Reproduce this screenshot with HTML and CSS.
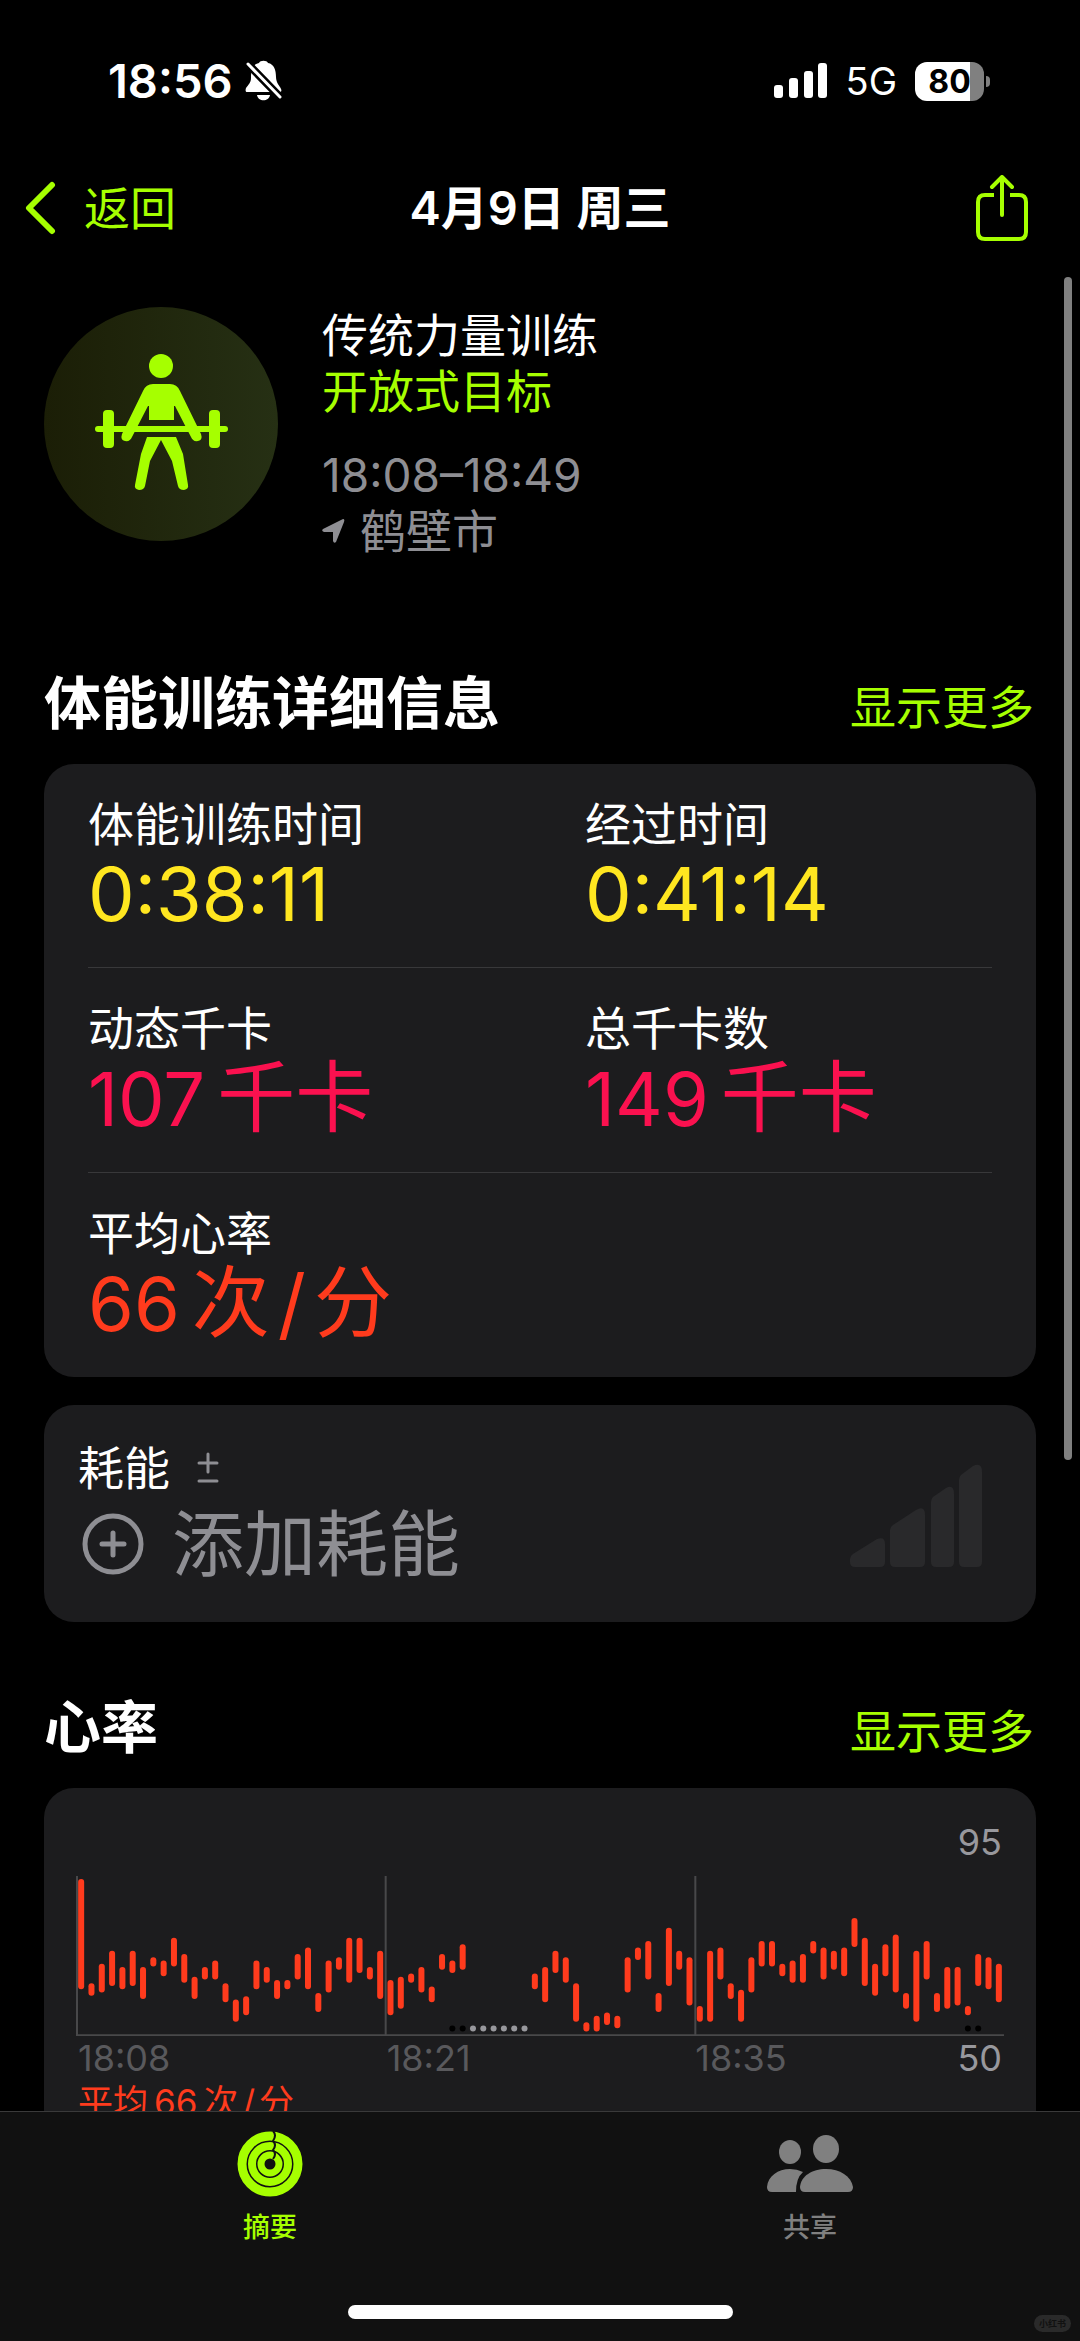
FILE: index.html
```
<!DOCTYPE html>
<html lang="zh-CN">
<head>
    <meta charset="UTF-8">
    <meta name="viewport" content="width=device-width, initial-scale=1.0">
    <title>体能训练</title>
    <link rel="stylesheet" href="styles.css">
</head>
<body>
    <div class="status-bar">
        <div class="status-left">
            <span class="clock">18:56</span>
            <svg class="bell" width="38" height="42" viewBox="0 0 38 42">
                <path fill="#fff" d="M2 32C1 32 0 31 1 28C3 25 6 23 6 18C6 10 8 4 14 3C15 0 22 0 23 3C29 4 31 10 31 17C31 23 35 26 36 29C37 31 36 32 34 32ZM12 35H25C24 42 13 42 12 35Z"/>
                <path stroke="#000" stroke-width="8" stroke-linecap="round" d="M3 4L35 37"/>
                <path stroke="#fff" stroke-width="3" stroke-linecap="round" d="M3 4L35 37"/>
            </svg>
        </div>
        <div class="status-right">
            <svg width="54" height="36" viewBox="0 0 54 36" fill="#fff">
                <rect x="0" y="22" width="9" height="13" rx="3"/>
                <rect x="15" y="15" width="9" height="20" rx="3"/>
                <rect x="30" y="8" width="9" height="27" rx="3"/>
                <rect x="44" y="0" width="9" height="35" rx="3"/>
            </svg>
            <span class="network">5G</span>
            <div class="battery"><span class="battery-level">80</span></div>
        </div>
    </div>

    <header class="nav">
        <button class="back" type="button">
            <svg width="32" height="56" viewBox="0 0 32 56">
                <path fill="none" stroke="#a6ff00" stroke-width="6" stroke-linecap="round" stroke-linejoin="round" d="M28 5L5 28L28 51"/>
            </svg>
            返回
        </button>
        <h1>4月9日 周三</h1>
        <button class="share" type="button" aria-label="共享">
            <svg width="52" height="66" viewBox="0 0 52 66" fill="none" stroke="#a6ff00" stroke-width="4" stroke-linejoin="round">
                <path d="M18 20H9Q2 20 2 27V57Q2 64 9 64H43Q50 64 50 57V27Q50 20 43 20H34"/>
                <path stroke-linecap="round" d="M26 40V3M16 12L26 2L36 12"/>
            </svg>
        </button>
    </header>

    <main class="content">
        <section class="hero">
            <svg class="hero-icon" width="234" height="234" viewBox="0 0 234 234">
                <defs>
                    <linearGradient id="disc" x1="0" y1="0" x2="1" y2="0">
                        <stop offset="0" stop-color="#1b1e06"/>
                        <stop offset="1" stop-color="#263014"/>
                    </linearGradient>
                </defs>
                <circle cx="117" cy="117" r="117" fill="url(#disc)"/>
                <g fill="#a6ff00">
                    <circle cx="117" cy="59" r="12"/>
                    <path d="M109 77H126Q133 77 136 84L157 127Q159 133 154 134Q149 135 147 130L131 99H130V113H105V99H104L88 130Q86 135 81 134Q76 133 78 127L99 84Q102 77 109 77Z"/>
                    <path d="M103 130H132L139 147L144 178Q145 182 140 183Q135 183 134 179L128 154L117 133L106 154L101 179Q100 183 95 183Q90 182 91 178L97 147Z"/>
                    <rect x="51" y="119" width="133" height="6" rx="3"/>
                    <rect x="59" y="103" width="11" height="38" rx="4"/>
                    <rect x="165" y="103" width="11" height="38" rx="4"/>
                </g>
            </svg>
            <div class="hero-text">
                <p>传统力量训练</p>
                <p class="goal">开放式目标</p>
                <p class="time">18:08–18:49</p>
                <p class="place">
                    <svg width="23" height="24" viewBox="0 0 23 24"><path fill="#8e8e93" d="M21 0Q23 0 22 3L14 23Q12 25 11 22V13H2Q-1 12 1 10Z"/></svg>
                    鹤壁市
                </p>
            </div>
        </section>

        <div class="section-head">
            <h2>体能训练详细信息</h2>
            <a href="#details">显示更多</a>
        </div>
        <section class="card stats" id="details">
            <div class="row">
                <div>
                    <p class="label">体能训练时间</p>
                    <p class="value yellow">0:38:11</p>
                </div>
                <div>
                    <p class="label">经过时间</p>
                    <p class="value yellow">0:41:14</p>
                </div>
            </div>
            <div class="row">
                <div>
                    <p class="label">动态千卡</p>
                    <p class="value pink">107<span class="unit">千卡</span></p>
                </div>
                <div>
                    <p class="label">总千卡数</p>
                    <p class="value pink">149<span class="unit">千卡</span></p>
                </div>
            </div>
            <div class="row">
                <div>
                    <p class="label">平均心率</p>
                    <p class="value red">66<span class="unit">次<span class="slash">/</span>分</span></p>
                </div>
            </div>
        </section>

        <section class="card effort">
            <div>
                <p class="label">耗能
                    <svg width="22" height="32" viewBox="0 0 22 32"><path stroke="#8e8e93" stroke-width="3" stroke-linecap="round" d="M11 2V20M2 11H20M2 29H20"/></svg>
                </p>
                <button class="add" type="button">
                    <svg width="62" height="62" viewBox="0 0 62 62" fill="none" stroke="#8e8e93" stroke-linecap="round">
                        <circle cx="31" cy="31" r="28" stroke-width="5"/>
                        <path stroke-width="5" d="M31 20V42M20 31H42"/>
                    </svg>
                    添加耗能
                </button>
            </div>
            <svg width="132" height="104" viewBox="0 0 132 104" fill="#29292b">
                <path d="M3 90L27 75Q35 72 35 80V98Q35 103 30 103H5Q0 103 0 98V95Q0 92 3 90Z"/>
                <path d="M43 61L66 46Q75 41 75 51V98Q75 103 70 103H45Q40 103 40 98V66Q40 63 43 61Z"/>
                <path d="M83 33L96 24Q104 20 104 30V98Q104 103 99 103H86Q81 103 81 98V38Q81 35 83 33Z"/>
                <path d="M111 11L123 2Q132 -2 132 8V98Q132 103 127 103H114Q109 103 109 98V16Q109 13 111 11Z"/>
            </svg>
        </section>

        <div class="section-head heart-head">
            <h2>心率</h2>
            <a href="#heart">显示更多</a>
        </div>
        <section class="card heart" id="heart">
            <p class="scale-max">95</p>
            <svg class="chart" id="chart" viewBox="0 0 926 160">
                <path class="grid-line" d="M1 0V159M309 0V159M618 0V159M0 159H926"/>
            </svg>
            <div class="axis">
                <span>18:08</span>
                <span>18:21</span>
                <span>18:35</span>
                <span class="scale-min">50</span>
            </div>
            <p class="average">平均<span class="average-value">66</span>次<span class="slash">/</span>分</p>
        </section>
    </main>

    <nav class="tab-bar">
        <div class="tabs">
            <a class="tab active" href="#summary">
                <svg width="66" height="66" viewBox="0 0 66 66" fill="none">
                    <circle cx="33" cy="33" r="28" stroke="#a6ff00" stroke-width="9"/>
                    <circle cx="33" cy="33" r="18" stroke="#a6ff00" stroke-width="8"/>
                    <circle cx="33" cy="33" r="9" stroke="#a6ff00" stroke-width="7"/>
                    <path stroke="#111" stroke-width="2" d="M36 0Q40 4 36 10Q40 14 36 19Q40 23 36 28"/>
                </svg>
                摘要
            </a>
            <a class="tab" href="#sharing">
                <svg width="86" height="66" viewBox="0 0 86 66" fill="#808080">
                    <ellipse cx="23" cy="21" rx="11" ry="12"/>
                    <ellipse cx="59" cy="18" rx="13" ry="14"/>
                    <path d="M5 61Q0 61 0 56C1 45 11 38 23 38Q30 38 36 41Q29 47 29 61Z"/>
                    <path d="M38 61Q33 61 33 56C34 45 45 38 59 38C73 38 84 45 86 56Q86 61 81 61Z"/>
                </svg>
                共享
            </a>
        </div>
        <div class="home-indicator"></div>
        <span class="watermark">小红书</span>
    </nav>
    <div class="scrollbar"></div>

    <script src="script.js"></script>
</body>
</html>
```
FILE: styles.css
```
* {
    box-sizing: border-box;
}
body {
    display: flex;
    flex-direction: column;
    height: 100vh;
    margin: 0;
    overflow: hidden;
    background-color: #000;
    color: #fff;
    font-family: Inter, "Noto Sans CJK SC", sans-serif;
    font-size: 46px;
    line-height: 56px;
}
h1, h2, p {
    margin: 0;
}
svg {
    display: block;
    flex: none;
}
button {
    padding: 0;
    border: 0;
    background: none;
    color: inherit;
    font: inherit;
}
a {
    color: #a6ff00;
    text-decoration: none;
}

/* status bar */
.status-bar {
    display: flex;
    flex: none;
    justify-content: space-between;
    align-items: center;
    height: 162px;
    padding: 0 90px 0 108px;
}
.status-left, .status-right {
    display: flex;
    align-items: center;
}
.status-left {
    gap: 12px;
}
.status-right {
    gap: 18px;
}
.clock {
    font-size: 47px;
    font-weight: 600;
}
.network {
    font-size: 38px;
}
.battery {
    position: relative;
    width: 69px;
    height: 39px;
    margin-right: 6px;
    border-radius: 12px;
    background: linear-gradient(to right, #fff 80%, #808080 80%);
}
.battery::after {
    content: "";
    position: absolute;
    top: 14px;
    right: -6px;
    width: 4px;
    height: 11px;
    border-radius: 0 4px 4px 0;
    background-color: #808080;
}
.battery-level {
    display: block;
    color: #000;
    font-size: 32px;
    font-weight: 700;
    line-height: 39px;
    text-align: center;
}

/* navigation */
.nav {
    display: grid;
    grid-template-columns: 1fr auto 1fr;
    align-items: center;
    flex: none;
    height: 92px;
    padding: 0 24px;
}
.nav h1 {
    font-size: 47px;
    font-weight: 600;
}
.back {
    display: flex;
    align-items: center;
    gap: 28px;
    color: #a6ff00;
}
.share {
    justify-self: end;
    margin-right: 28px;
}

.content {
    flex: 1;
    min-height: 0;
    overflow: hidden;
    padding: 53px 44px 0;
}
.hero {
    display: flex;
    gap: 44px;
}
.goal {
    color: #a6ff00;
}
.time {
    margin-top: 28px;
    color: #8e8e93;
}
.place {
    display: flex;
    align-items: center;
    gap: 15px;
    color: #8e8e93;
}
.section-head {
    display: flex;
    justify-content: space-between;
    align-items: baseline;
    margin: 105px 0 20px;
    padding-right: 2px;
}
.heart-head {
    margin-top: 66px;
}
h2 {
    font-size: 57px;
    font-weight: 700;
    line-height: 80px;
}
.card {
    border-radius: 30px;
    background-color: #1c1c1e;
}

/* workout details */
.stats {
    padding: 0 44px;
}
.row {
    display: grid;
    grid-template-columns: 1fr 1fr;
    gap: 90px;
    padding: 32px 0 31px;
}
.row + .row {
    border-top: 1px solid #38383a;
}
.value {
    font-size: 74px;
    line-height: 84px;
    white-space: nowrap;
}
.unit {
    margin-left: 12px;
    font-size: 78px;
}
.slash {
    margin: 0 8px;
}
.yellow {
    color: #ffe620;
}
.pink {
    color: #fa114f;
}
.red {
    color: #ff3b1d;
}

/* effort */
.effort {
    display: flex;
    justify-content: space-between;
    align-items: center;
    margin-top: 28px;
    padding: 35px 54px 30px 34px;
}
.effort .label {
    display: flex;
    align-items: center;
    gap: 27px;
}
.add {
    display: flex;
    align-items: center;
    gap: 28px;
    padding-left: 4px;
    color: #8e8e93;
    font-size: 72px;
    line-height: 96px;
}

/* heart rate */
.heart {
    padding: 32px 32px 60px;
    font-size: 36px;
    line-height: 44px;
}
.scale-max {
    padding-right: 2px;
    color: #98989d;
    text-align: right;
}
.chart {
    width: 100%;
    margin-top: 12px;
}
.grid-line {
    fill: none;
    stroke: #48484a;
    stroke-width: 2;
}
.bar {
    stroke: #ff3b1d;
    stroke-width: 6;
    stroke-linecap: round;
}
.axis {
    display: grid;
    grid-template-columns: 1fr 1fr 1fr 0;
    padding-left: 2px;
    color: #59595c;
}
.axis .scale-min {
    justify-self: end;
    padding-right: 2px;
    color: #98989d;
}
.average {
    padding-left: 2px;
    color: #ff3b1d;
    font-size: 35px;
}
.average-value {
    margin: 0 6px;
}
.average .slash {
    margin: 0 4px;
}

/* tab bar */
.tab-bar {
    position: relative;
    flex: none;
    padding-bottom: 22px;
    border-top: 1px solid #3a3a3a;
    background-color: #111;
}
.tabs {
    display: grid;
    grid-template-columns: 1fr 1fr;
    padding: 19px 0 61px;
}
.tab {
    display: flex;
    flex-direction: column;
    align-items: center;
    gap: 15px;
    color: #808080;
    font-size: 27px;
    font-weight: 500;
    line-height: 32px;
}
.tab.active {
    color: #a6ff00;
}
.home-indicator {
    width: 36%;
    max-width: 385px;
    height: 14px;
    margin: 0 auto;
    border-radius: 7px;
    background-color: #fff;
}
.watermark {
    position: absolute;
    right: 9px;
    bottom: 9px;
    padding: 0 5px;
    border-radius: 9px;
    background-color: #2a2a2a;
    color: #111;
    font-size: 9px;
    font-weight: 700;
    line-height: 17px;
}
.scrollbar {
    position: absolute;
    top: 277px;
    right: 8px;
    width: 8px;
    height: 1183px;
    border-radius: 4px;
    background-color: #808080;
}
```
FILE: script.js
```
// [max, min] bpm for each slot, null where nothing was recorded
const heartRate = [
    [95, 63], [63, 61], [69, 62], [73, 64], [68, 63], [73, 64], [68, 60], [71, 70], [70, 67], [77, 70],
    [72, 65], [65, 60], [68, 66], [70, 66], [63, 59], [58, 53], [59, 55], [70, 63], [68, 65], [64, 60],
    [64, 63], [72, 66], [74, 63], [60, 56], [70, 62], [71, 69], [77, 65], [77, 68], [68, 66], [73, 60],
    [64, 55], [65, 57], [66, 65], [68, 62], [62, 59], [72, 69], [70, 68], [75, 69], null, null,
    null, null, null, null, [66, 63], [68, 59], [73, 68], [71, 65], [63, 53], [51, 50],
    [53, 50], [54, 52], [53, 51], [71, 62], [74, 72], [76, 66], [60, 56], [80, 64], [73, 69], [71, 58],
    [56, 53], [73, 53], [74, 66], [63, 60], [61, 53], [71, 62], [76, 70], [76, 70], [69, 67], [70, 65],
    [72, 65], [76, 74], [74, 66], [73, 69], [74, 67], [83, 76], [77, 64], [69, 61], [75, 67], [78, 62],
    [60, 57], [73, 53], [76, 66], [60, 56], [68, 57], [68, 58], [56, 55], [72, 64], [71, 63], [69, 59]
];
const darkDots = [36, 37, 86, 87];
const greyDots = [38, 39, 40, 41, 42, 43];

const chart = document.getElementById('chart');
const slot = 926 / heartRate.length;

function xPos(i) {
    return slot * (i + 0.5);
}
function yPos(bpm) {
    return 6 + (95 - bpm) * 3.25;
}
function addShape(name, attrs) {
    const el = document.createElementNS('http://www.w3.org/2000/svg', name);
    for (const key in attrs) {
        el.setAttribute(key, attrs[key]);
    }
    chart.appendChild(el);
}

heartRate.forEach(function(range, i) {
    if (range) {
        addShape('line', { class: 'bar', x1: xPos(i), x2: xPos(i), y1: yPos(range[0]), y2: yPos(range[1]) });
    }
});
darkDots.forEach(function(i) {
    addShape('circle', { cx: xPos(i), cy: yPos(50), r: 3, fill: '#000' });
});
greyDots.forEach(function(i) {
    addShape('circle', { cx: xPos(i), cy: yPos(50), r: 3, fill: '#98989d' });
});
```
